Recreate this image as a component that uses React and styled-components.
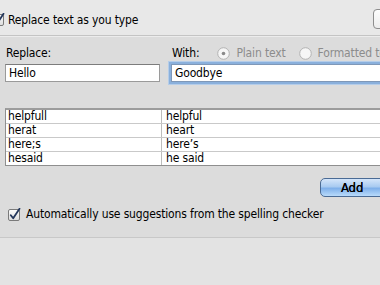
import React from 'react';
import styled, { createGlobalStyle } from 'styled-components';

const Global = createGlobalStyle`
  html, body { margin: 0; padding: 0; background: #dcdcdc; }
  body { font-family: "DejaVu Sans Condensed", "DejaVu Sans", sans-serif; }
`;

const Window = styled.div`
  width: 380px;
  height: 285px;
  overflow: hidden;
  display: flex;
  flex-direction: column;
  background: #dcdcdc;
  color: #000;
  font-size: 12px;
  letter-spacing: -0.15px;
`;

const TopBar = styled.div`
  height: 36px;
  flex: none;
  display: flex;
  align-items: center;
  justify-content: space-between;
  background: #e8e8e8;
  border-bottom: 1px solid #c4c4c4;
  box-shadow: 0 1px 0 #ececec;
  padding-top: 4px;
  box-sizing: border-box;
  margin-left: -8px;
`;

const CheckRow = styled.label`
  display: flex;
  align-items: center;
  gap: ${p => p.$gap || 3}px;
`;

const GhostButton = styled.div`
  width: 30px;
  height: 18px;
  margin-right: -25px;
  border: 1px solid #8d8d8d;
  border-radius: 4px;
  background: linear-gradient(#fdfdfd, #ececec);
  margin-top: -2px;
`;

const Main = styled.div`
  flex: 1;
  padding: 9px 0 0 5px;
  display: flex;
  flex-direction: column;
  border-bottom: 1px solid #c8c8c8;
`;

const FieldsRow = styled.div`
  display: flex;
  gap: 11px;
`;

const Field = styled.div`
  display: flex;
  flex-direction: column;
  width: ${p => p.$w}px;
  flex: none;
`;

const LabelRow = styled.div`
  display: flex;
  align-items: center;
  height: 16px;
  margin-bottom: 3px;
  padding-left: 1px;
  gap: 18px;
`;

const Radio = styled.span`
  display: flex;
  align-items: center;
  gap: 6px;
  color: #8c8c8c;
  margin-left: ${p => p.$ml || 0}px;
`;

const Input = styled.div`
  height: 18px;
  box-sizing: border-box;
  background: #fff;
  border: 1px solid #9a9a9a;
  border-top-color: #7c7c7c;
  padding: 1px 3px;
  line-height: 14px;
  ${p => p.$focus && `
    border-color: #7f98b8;
    box-shadow: 0 0 0 2px #8ab0dc, 0 0 0 3px #b5cde9;
  `}
`;

const Table = styled.div`
  margin-top: 26px;
  width: 400px;
  background: #fff;
  border: 1px solid #8f8f8f;
  border-top: 2px solid #9c9c9c;
`;

const Row = styled.div`
  display: grid;
  grid-template-columns: 155px 1fr;
  height: 13px;
  line-height: 13px;
  border-bottom: ${p => (p.$last ? 'none' : '1px solid #c9c9c9')};
`;

const Cell = styled.div`
  padding-left: 2px;
  & + & { border-left: 1px solid #bdbdbd; padding-left: 4px; }
`;

const ButtonRow = styled.div`
  display: flex;
  justify-content: flex-end;
  margin-top: 12px;
  margin-right: -30px;
`;

const AddButton = styled.div`
  width: 90px;
  height: 19px;
  box-sizing: border-box;
  border: 1px solid #4a6b95;
  border-radius: 5px;
  background: linear-gradient(#d5e6fa 0%, #a9cbf1 45%, #7fb0ea 55%, #b9dbfb 100%);
  font-size: 13px;
  line-height: 17px;
  padding-left: 20px;
  text-shadow: 0 0 0.4px #000;
`;

const BottomCheck = styled.div`
  margin-top: 10px;
  padding-left: 3px;
`;

const Footer = styled.div`
  height: 47px;
  flex: none;
  background: #e3e3e3;
`;

const CheckBox = () => (
  <svg width="13" height="13" viewBox="0 0 13 13">
    <defs>
      <linearGradient id="cb" x1="0" y1="0" x2="0" y2="1">
        <stop offset="0" stopColor="#fdfdfd" />
        <stop offset="1" stopColor="#dcdcdc" />
      </linearGradient>
    </defs>
    <rect x="0.5" y="1.5" width="11" height="11" rx="1.5" fill="url(#cb)" stroke="#7a7a7a" />
    <path d="M2.8 7.2 L5.2 10.2 L11.5 0.8" fill="none" stroke="#23375c" strokeWidth="1.8" strokeLinecap="round" strokeLinejoin="round" />
  </svg>
);

const RadioDot = ({ on }) => (
  <svg width="13" height="13" viewBox="0 0 13 13">
    <circle cx="6.5" cy="6.5" r="5.8" fill="#f6f6f6" stroke="#b3b3b3" />
    {on && <circle cx="6.5" cy="6.5" r="1.8" fill="#8a8a8a" />}
  </svg>
);

const rows = [
  ['helpfull', 'helpful'],
  ['herat', 'heart'],
  ['here;s', 'here\u2019s'],
  ['hesaid', 'he said'],
];

export default function App() {
  return (
    <Window>
      <Global />
      <TopBar>
        <CheckRow>
          <CheckBox />
          <span>Replace text as you type</span>
        </CheckRow>
        <GhostButton />
      </TopBar>
      <Main>
        <FieldsRow>
          <Field $w={155}>
            <LabelRow>Replace:</LabelRow>
            <Input>Hello</Input>
          </Field>
          <Field $w={230}>
            <LabelRow>
              <span>With:</span>
              <Radio><RadioDot on />Plain text</Radio>
              <Radio $ml={-5}><RadioDot />Formatted text</Radio>
            </LabelRow>
            <Input $focus>Goodbye</Input>
          </Field>
        </FieldsRow>
        <Table>
          {rows.map(([a, b], i) => (
            <Row key={a} $last={i === rows.length - 1}>
              <Cell>{a}</Cell>
              <Cell>{b}</Cell>
            </Row>
          ))}
        </Table>
        <ButtonRow>
          <AddButton>Add</AddButton>
        </ButtonRow>
        <BottomCheck>
          <CheckRow $gap={5}>
            <CheckBox />
            <span>Automatically use suggestions from the spelling checker</span>
          </CheckRow>
        </BottomCheck>
      </Main>
      <Footer />
    </Window>
  );
}
